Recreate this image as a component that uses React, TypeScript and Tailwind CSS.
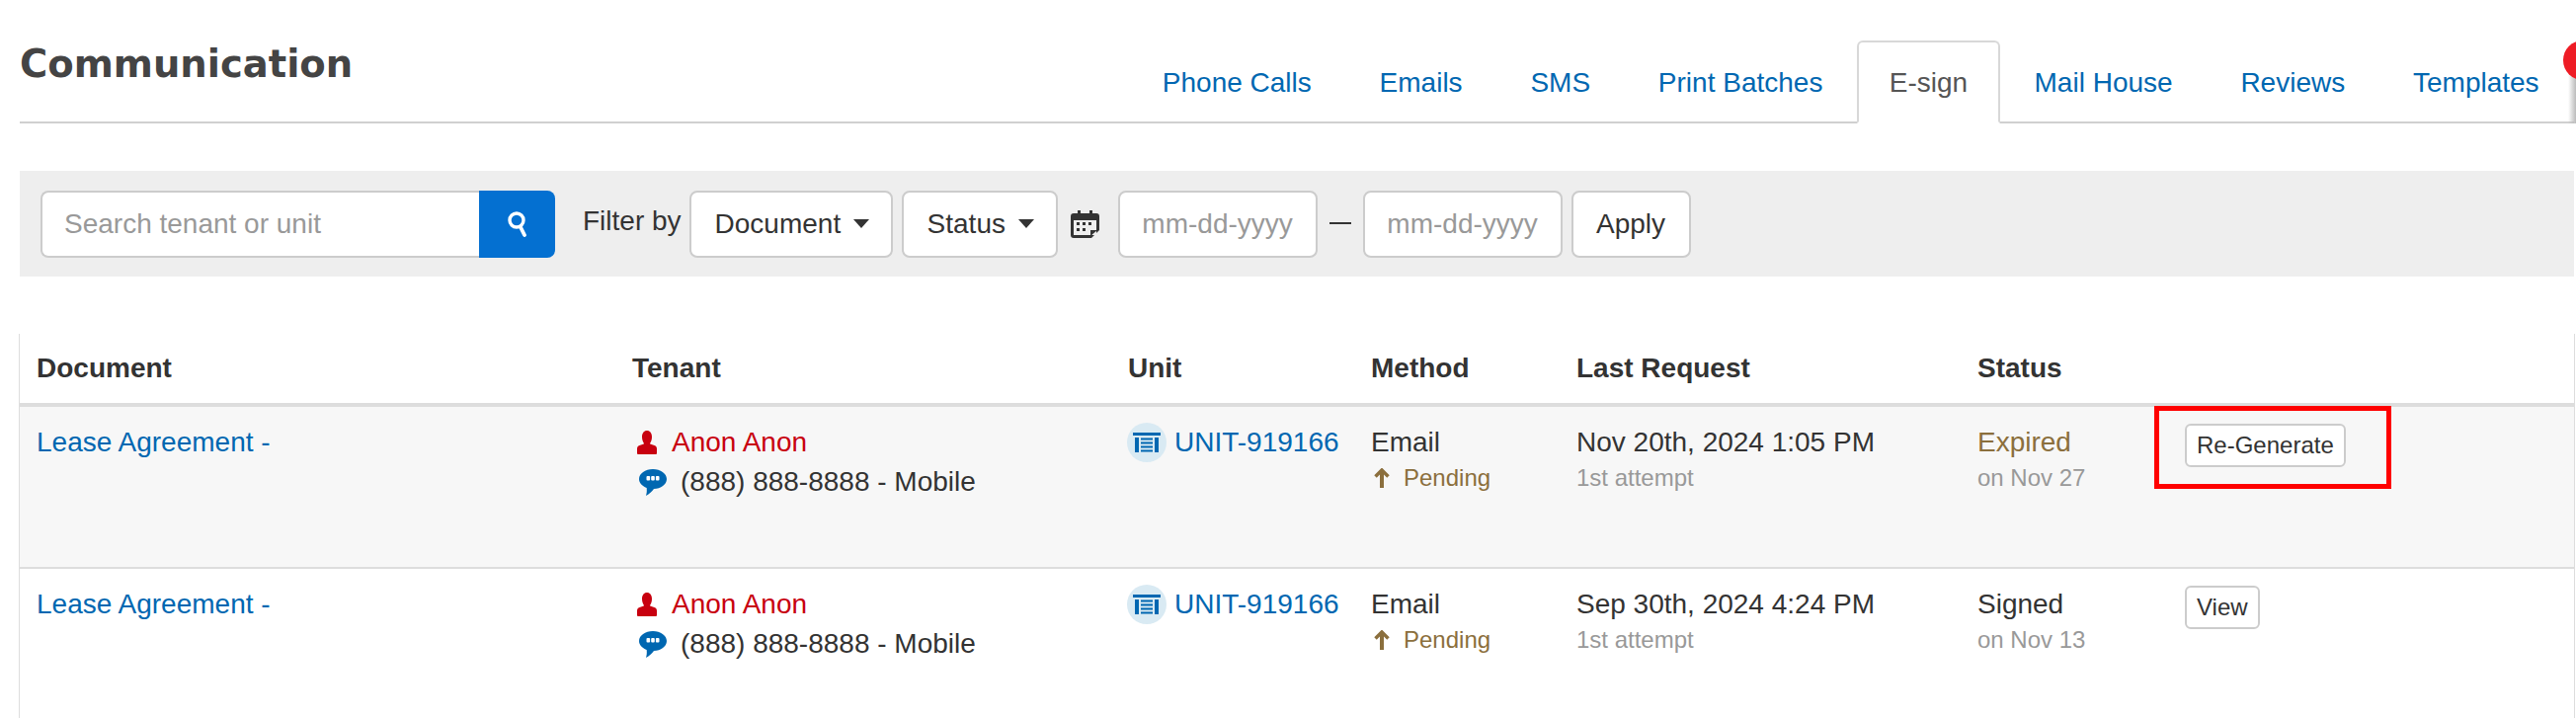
import React from "react";

const Caret = () => (
  <svg width="16" height="9" viewBox="0 0 16 9" className="shrink-0"><path d="M0 0h16L8 9z" fill="#333" /></svg>
);

const SearchIcon = () => (
  <svg width="20" height="26" viewBox="0 0 20 26" fill="none">
    <circle cx="9" cy="9" r="7" stroke="#fff" strokeWidth="3.4" />
    <path d="M13 16l4 8" stroke="#fff" strokeWidth="3.8" strokeLinecap="round" />
  </svg>
);

const CalendarIcon = () => (
  <svg width="29" height="28" viewBox="0 0 29 28">
    <path d="M3 3h4V0h3v3h9V0h3v3h4a3 3 0 0 1 3 3v14l-8 8H3a3 3 0 0 1-3-3V6a3 3 0 0 1 3-3z" fill="#333" />
    <rect x="3" y="10" width="23" height="15" fill="#eee" />
    <path d="M20 26v-6h7l-7 6z" fill="#333" />
    <g fill="#333">
      <rect x="6" y="12" width="3" height="3" /><rect x="12" y="12" width="3" height="3" /><rect x="18" y="12" width="3" height="3" />
      <rect x="6" y="18" width="3" height="3" /><rect x="12" y="18" width="3" height="3" />
    </g>
  </svg>
);

const PersonIcon = () => (
  <svg width="20" height="24" viewBox="0 0 20 24" className="shrink-0">
    <path d="M10 0c3 0 5 2.600 5 6.500 0 2.800-1 5-2 6.500.4 1 2.500 1.300 4.500 2 1.700.6 2.500 1.600 2.500 3.500v4.500a1 1 0 0 1-1 1H1a1 1 0 0 1-1-1V18.500c0-1.900.8-2.900 2.500-3.500C4.500 14.300 6.600 14 7 13c-1-1.500-2-3.700-2-6.500C5 2.600 7 0 10 0z" fill="#c8000f" />
  </svg>
);

const ChatIcon = () => (
  <svg width="28" height="27" viewBox="0 0 28 27" className="shrink-0">
    <path d="M14 0c7.700 0 14 4.500 14 10s-6 10-13 10c-2 2.600-4.500 5-8 7 .8-2.600 1-5 .7-8C3 17 0 13.800 0 10 0 4.500 6.300 0 14 0z" fill="#0067b1" />
    <g fill="#fff"><rect x="7.500" y="7" width="3.600" height="4.400" rx="1" /><rect x="12.200" y="7" width="3.600" height="4.400" rx="1" /><rect x="16.900" y="7" width="3.600" height="4.400" rx="1" /></g>
  </svg>
);

const UnitIcon = () => (
  <span className="flex h-[40px] w-[40px] shrink-0 items-center justify-center rounded-full bg-[#d9eaf3]">
    <svg width="28" height="20" viewBox="0 0 28 20" fill="#0067b1">
      <rect x="0" y="0" width="28" height="3" />
      <rect x="2" y="5" width="4" height="15" /><rect x="22" y="5" width="4" height="15" />
      <rect x="8" y="5.500" width="12" height="2" /><rect x="8" y="9.500" width="12" height="2" /><rect x="8" y="13.500" width="12" height="2" /><rect x="8" y="17.500" width="12" height="2" />
    </svg>
  </span>
);

const ArrowUp = () => (
  <svg width="16" height="20" viewBox="0 0 16 20" fill="none" className="shrink-0">
    <path d="M8 20V3" stroke="#8b6f3d" strokeWidth="4" />
    <path d="M1.500 8.500L8 2l6.500 6.500" stroke="#8b6f3d" strokeWidth="3.500" />
  </svg>
);

const Tab = ({ label, active }: { label: string; active?: boolean }) => (
  <div
    className={
      active
        ? "-mb-[2px] flex h-[84px] items-center rounded-t-[6px] border-2 border-[#d8d8d8] border-b-white bg-white px-[31px] pt-[2px] text-[#555]"
        : "-mb-[2px] flex h-[84px] items-center border-2 border-transparent px-[32.4px] pt-[2px] text-[#0067b1]"
    }
  >
    {label}
  </div>
);

const COLS = "grid grid-cols-[603px_502px_246px_208px_406px_210px_1fr]";

const Row = (p: {
  date: string;
  status: string;
  statusCls: string;
  on: string;
  action: string;
  cls: string;
}) => (
  <div className={`${COLS} ${p.cls} text-[28px] leading-[40px] text-[#333]`}>
    <div className="pl-[17px] pt-[16px] text-[#0067b1]">Lease Agreement -</div>
    <div className="pl-[17px] pt-[16px]">
      <div className="flex items-center gap-[15px] pl-[5px] text-[#c8000f]"><PersonIcon /><span>Anon Anon</span></div>
      <div className="flex items-center gap-[14px] pl-[7px]"><ChatIcon /><span>(888) 888-8888 - Mobile</span></div>
    </div>
    <div className="pl-[16px] pt-[16px]">
      <div className="flex items-center gap-[8px] text-[#0067b1]"><UnitIcon /><span>UNIT-919166</span></div>
    </div>
    <div className="pl-[17px] pt-[16px]">
      <div>Email</div>
      <div className="-mt-[2px] flex h-[36px] items-center gap-[14px] pl-[3px] text-[24px] text-[#8b6f3d]"><ArrowUp /><span>Pending</span></div>
    </div>
    <div className="pl-[17px] pt-[16px]">
      <div>{p.date}</div>
      <div className="-mt-[2px] h-[36px] text-[24px] leading-[36px] text-[#999]">1st attempt</div>
    </div>
    <div className="pl-[17px] pt-[16px]">
      <div className={p.statusCls}>{p.status}</div>
      <div className="-mt-[2px] h-[36px] text-[24px] leading-[36px] text-[#999]">{p.on}</div>
    </div>
    <div className="pl-[17px] pt-[17px]">
      <button className="h-[44px] rounded-[6px] border-2 border-[#ccc] bg-white px-[10px] text-[24px] leading-[38px] text-[#333]">{p.action}</button>
    </div>
  </div>
);

export default function App() {
  return (
    <div className="relative h-[727px] w-[2608px] overflow-hidden bg-white pl-[20px] pr-[2px] font-['Liberation_Sans',Arial,sans-serif]">
      <header className="flex h-[125px] items-end justify-between border-b-2 border-[#d0d0d0] pr-[1px] text-[28px]">
        <h1 className="self-start pt-[41px] font-['DejaVu_Sans',sans-serif] text-[38.500px] font-bold leading-[48px] text-[#444]">Communication</h1>
        <nav className="flex">
          <Tab label="Phone Calls" />
          <Tab label="Emails" />
          <Tab label="SMS" />
          <Tab label="Print Batches" />
          <Tab label="E-sign" active />
          <Tab label="Mail House" />
          <Tab label="Reviews" />
          <Tab label="Templates" />
        </nav>
      </header>

      <section className="mt-[48px] flex h-[107px] items-center bg-[#eee] pl-[21px] text-[28px] text-[#333]">
        <div className="flex h-[68px] w-[521px]">
          <div className="flex flex-1 items-center rounded-l-[8px] border-2 border-[#ccc] border-r-0 bg-white pl-[22px] text-[#999]">Search tenant or unit</div>
          <button className="flex w-[77px] items-center justify-center rounded-r-[8px] bg-[#0470d1]"><SearchIcon /></button>
        </div>
        <span className="ml-[28px] mr-[8px] -translate-y-[3px]">Filter by</span>
        <button className="flex h-[68px] w-[206px] items-center gap-[13px] rounded-[8px] border-2 border-[#ccc] bg-white pl-[24px]">Document <Caret /></button>
        <button className="ml-[9px] flex h-[68px] w-[158px] items-center gap-[13px] rounded-[8px] border-2 border-[#ccc] bg-white pl-[24px]">Status <Caret /></button>
        <span className="ml-[13px] mr-[19px] flex"><CalendarIcon /></span>
        <div className="flex h-[68px] w-[202px] items-center justify-center rounded-[8px] border-2 border-[#ccc] bg-white text-[#999]">mm-dd-yyyy</div>
        <span className="mx-[12px] h-[2px] w-[22px] -translate-y-[1px] bg-[#333]" />
        <div className="flex h-[68px] w-[202px] items-center justify-center rounded-[8px] border-2 border-[#ccc] bg-white text-[#999]">mm-dd-yyyy</div>
        <button className="ml-[9px] h-[68px] w-[121px] rounded-[8px] border-2 border-[#ccc] bg-white">Apply</button>
      </section>

      <section className="-ml-px mt-[58px] h-[389px] w-[2588px] border-x border-[#ddd]">
        <div className={`${COLS} h-[74px] items-center border-b-4 border-[#ddd] text-[28px] font-bold text-[#333]`}>
          {["Document", "Tenant", "Unit", "Method", "Last Request", "Status", ""].map((h, i) => (
            <div key={i} className="pl-[17px]">{h}</div>
          ))}
        </div>
        <Row date="Nov 20th, 2024 1:05 PM" status="Expired" statusCls="text-[#8b6f3d]" on="on Nov 27" action="Re-Generate" cls="h-[164px] border-b-2 border-[#ddd] bg-[#f7f7f7]" />
        <Row date="Sep 30th, 2024 4:24 PM" status="Signed" statusCls="" on="on Nov 13" action="View" cls="h-[151px]" />
      </section>

      <div className="absolute left-[2181px] top-[411px] h-[84px] w-[240px] border-[5px] border-[#f00]" />
      <div className="absolute left-[2600px] top-[70px] h-[55px] w-[8px] bg-linear-to-r from-transparent to-[#bbb]" />
      <div className="absolute left-[2595px] top-[41px] h-[40px] w-[40px] rounded-full bg-[#ee1c25]" />
    </div>
  );
}
